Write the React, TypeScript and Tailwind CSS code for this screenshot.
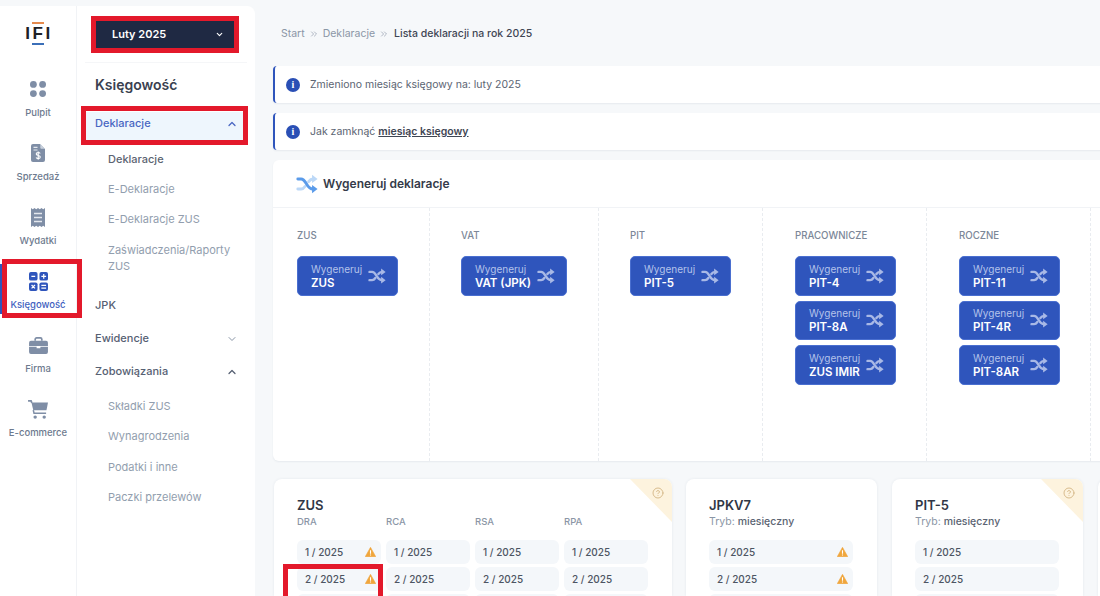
import { ChevronDown, ChevronUp, ChevronsRight, CircleHelp } from "lucide-react";

const Shuffle = ({ className = "", main = "currentColor", light = "currentColor" }: { className?: string; main?: string; light?: string }) => (
  <svg viewBox="0 0 24 24" fill="none" className={className}>
    <path d="M2 17.5h3.5c2 0 3.2-1.2 4.3-2.8M13.8 9.4C15 7.8 16.2 6.5 18.5 6.5" stroke={light} strokeWidth="3.2" strokeLinecap="round" />
    <path d="M17.5 2 23.5 6.5l-6 4.5z" fill={light} />
    <path d="M2 6.5h3.5c3 0 4.2 2.4 6 5.5s3.2 5.5 7 5.5" stroke={main} strokeWidth="3.2" strokeLinecap="round" />
    <path d="M17.5 13 23.5 17.5l-6 4.5z" fill={main} />
  </svg>
);

const iconPulpit = (
  <svg viewBox="0 0 16 16" className="w-[16px] h-[16px]" fill="#7f8ea6">
    <circle cx="3.4" cy="3.4" r="3.4" />
    <circle cx="12.6" cy="3.4" r="3.4" />
    <circle cx="3.4" cy="12.6" r="3.4" />
    <circle cx="12.6" cy="12.6" r="3.4" />
  </svg>
);

const iconSprzedaz = (
  <svg viewBox="0 0 14 18" className="w-[14px] h-[18px]">
    <path d="M2 0h7l5 5v11a2 2 0 0 1-2 2H2a2 2 0 0 1-2-2V2a2 2 0 0 1 2-2z" fill="#7f8ea6" />
    <path d="M9.3 0v3.7a1 1 0 0 0 1 1H14z" fill="#c9d1dd" />
    <path d="M2.5 3.4h4M2.5 6h4" stroke="#e4e8ee" strokeWidth="1.1" />
    <path d="M9.2 9.4c-.4-.7-1.2-.9-2-.9-1.1 0-2 .5-2 1.5 0 2 4.1 1 4.1 3 0 1-.9 1.6-2.1 1.6-.9 0-1.7-.4-2.1-1.1M7.2 7.5v8.2" stroke="#fff" strokeWidth="1.1" fill="none" />
  </svg>
);

const iconWydatki = (
  <svg viewBox="0 0 14 19" className="w-[14px] h-[19px]">
    <path d="M0 0l1.75 1.2L3.5 0l1.75 1.2L7 0l1.75 1.2L10.5 0l1.75 1.2L14 0v19l-1.75-1.2L10.5 19l-1.75-1.2L7 19l-1.75-1.2L3.5 19l-1.75-1.2L0 19z" fill="#7f8ea6" />
    <path d="M3 5.5h8M3 9.5h8M3 13.5h8" stroke="#e4e8ee" strokeWidth="1.4" />
  </svg>
);

const iconKsiegowosc = (
  <svg viewBox="0 0 20 20" className="w-[19px] h-[19px]">
    <rect x="0" y="0" width="9" height="9" rx="2" fill="#2f55bc" />
    <rect x="11" y="0" width="9" height="9" rx="2" fill="#2f55bc" />
    <rect x="0" y="11" width="9" height="9" rx="2" fill="#2f55bc" />
    <rect x="11" y="11" width="9" height="9" rx="2" fill="#2f55bc" />
    <path d="M2.5 4.5h4M13 4.5h5M15.5 2v5M2.7 13.7l3.6 3.6M6.3 13.7l-3.6 3.6M13 14h5M13 17h5" stroke="#fff" strokeWidth="1.3" />
  </svg>
);

const iconFirma = (
  <svg viewBox="0 0 20 18" className="w-[19px] h-[17px]">
    <path d="M6.5 4V2.5A1.5 1.5 0 0 1 8 1h4a1.5 1.5 0 0 1 1.5 1.5V4" fill="none" stroke="#7f8ea6" strokeWidth="1.8" />
    <path d="M0 6a2 2 0 0 1 2-2h16a2 2 0 0 1 2 2v3.4H0z" fill="#7f8ea6" />
    <path d="M0 10.4h8V12h4v-1.6h8V16a2 2 0 0 1-2 2H2a2 2 0 0 1-2-2z" fill="#7f8ea6" />
  </svg>
);

const iconCart = (
  <svg viewBox="0 0 22 20" className="w-[21px] h-[19px]">
    <path d="M0 1h3.2l.8 2" fill="none" stroke="#7f8ea6" strokeWidth="1.8" />
    <path d="M3.6 2.5H21l-1.6 8.2H5.5z" fill="#7f8ea6" />
    <path d="M5.5 10.7 6.3 14H19" fill="none" stroke="#7f8ea6" strokeWidth="1.6" />
    <circle cx="7.5" cy="18" r="1.8" fill="#7f8ea6" />
    <circle cx="17" cy="18" r="1.8" fill="#7f8ea6" />
  </svg>
);

const railItems = [
  { label: "Pulpit", icon: iconPulpit },
  { label: "Sprzedaż", icon: iconSprzedaz },
  { label: "Wydatki", icon: iconWydatki },
  { label: "Księgowość", icon: iconKsiegowosc, active: true },
  { label: "Firma", icon: iconFirma },
  { label: "E-commerce", icon: iconCart },
];

const Rail = () => (
  <div className="w-[77px] shrink-0 border-r border-[#f1f3f6] flex flex-col items-center">
    <div className="mt-[16px] h-[26px] w-full flex flex-col items-center">
      <div className="w-[12px] h-[2px] bg-[#e58a4e]" />
      <div className="text-[17px] leading-[19px] font-bold tracking-[2.5px] pl-[2px] text-[#1d2026] font-['Liberation_Sans',sans-serif]">IFI</div>
      <div className="w-[12px] h-[2px] bg-[#3b6fb8]" />
    </div>
    <div className="mt-[18px] w-full flex flex-col">
      {railItems.map((item) => (
        <div key={item.label} className="relative h-[64px] flex flex-col items-center pt-[11px]">
          {item.active && <div className="absolute left-0 top-[6px] w-[2px] h-[50px] bg-[#2f55bc]" />}
          <div className="h-[24px] flex items-center justify-center">{item.icon}</div>
          <div className={"mt-[5px] text-[9.5px] leading-[14px] font-medium " + (item.active ? "text-[#3f5fc0]" : "text-[#6d7a8e]")}>
            {item.label}
          </div>
        </div>
      ))}
    </div>
  </div>
);

const SubLink = ({ label, dark }: { label: string; dark?: boolean }) => (
  <div className={"h-[30px] flex items-center pl-[31px] text-[11px] " + (dark ? "text-[#5b6472] font-medium" : "text-[#929eae]")}>{label}</div>
);

const MonthMenu = () => (
  <div className="flex-1 min-w-0 flex flex-col">
    <div className="mx-[19px] mt-[15px] h-[27px] bg-[#1f2943] flex items-center justify-between pl-[16px] pr-[12px] text-white text-[11px] font-semibold">
      Luty 2025
      <ChevronDown className="w-[9px] h-[9px]" strokeWidth={3} />
    </div>
    <div className="mx-[8px] mt-[14px] h-px bg-[#f5f6f8]" />
    <div className="pl-[18px] mt-[11px] h-[20px] flex items-center text-[14px] font-semibold text-[#3a4150]">Księgowość</div>
    <div className="mt-[18px] ml-[9px] mr-[11px] h-[29px] pb-[6px] bg-[#eef6fd] flex items-center justify-between pl-[9px] pr-[6px] text-[11px] font-medium text-[#4866c2]">
      Deklaracje
      <ChevronUp className="w-[12px] h-[12px] text-[#4866c2]" strokeWidth={2.5} />
    </div>
    <div className="mt-[3px]">
      <SubLink label="Deklaracje" dark />
      <SubLink label="E-Deklaracje" />
      <SubLink label="E-Deklaracje ZUS" />
      <div className="h-[48px] flex items-center pl-[31px] text-[11px] leading-[16px] text-[#929eae]">
        Zaświadczenia/Raporty
        <br />
        ZUS
      </div>
    </div>
    <div className="mt-[7px] text-[11px] font-medium text-[#566073]">
      <div className="h-[33px] flex items-center pl-[18px]">JPK</div>
      <div className="h-[33px] flex items-center justify-between pl-[18px] pr-[17px]">
        Ewidencje
        <ChevronDown className="w-[12px] h-[12px] text-[#8995a6]" strokeWidth={2} />
      </div>
      <div className="h-[33px] flex items-center justify-between pl-[18px] pr-[17px]">
        Zobowiązania
        <ChevronUp className="w-[12px] h-[12px] text-[#566073]" strokeWidth={2.5} />
      </div>
    </div>
    <div className="mt-[3px] flex flex-col gap-[0.5px]">
      <SubLink label="Składki ZUS" />
      <SubLink label="Wynagrodzenia" />
      <SubLink label="Podatki i inne" />
      <SubLink label="Paczki przelewów" />
    </div>
  </div>
);

const InfoAlert = ({ children }: { children: React.ReactNode }) => (
  <div className="h-[37px] bg-white rounded-l-[4px] border-l-2 border-[#2f55bc] shadow-[0_1px_2px_rgba(30,50,90,0.07)] flex items-center pl-[11px] text-[10.5px] text-[#5b6472]">
    <div className="w-[14px] h-[14px] rounded-full bg-[#2a4fb5] text-white text-[10px] leading-[14px] text-center font-bold font-['Liberation_Serif',serif] mr-[10px]">i</div>
    <div>{children}</div>
  </div>
);

const GenButton = ({ label, wide }: { label: string; wide?: boolean }) => (
  <div className={"h-[39.5px] bg-[#2f55bc] border border-[#4a6fd0] rounded-[5px] flex items-center justify-between pl-[13px] pr-[11px] " + (wide ? "w-[106px]" : "w-[101px]")}>
    <div>
      <div className="text-[10px] leading-[14px] text-[#b4c3ea]">Wygeneruj</div>
      <div className="text-[11.5px] leading-[14px] font-semibold text-white whitespace-nowrap">{label}</div>
    </div>
    <Shuffle className="w-[18px] h-[18px] shrink-0 text-[#a9b9e6]" />
  </div>
);

const GenColumn = ({ title, buttons, width, pad }: { title: string; buttons: string[]; width: string; pad: string }) => (
  <div className={"shrink-0 border-r border-dashed border-[#e9ecf0] pt-[21px] " + width + " " + pad}>
    <div className="h-[14px] flex items-center text-[9.7px] font-medium text-[#7c8798]">{title}</div>
    <div className="mt-[13px] flex flex-col gap-[5px]">
      {buttons.map((b) => (
        <GenButton key={b} label={b} wide={b === "VAT (JPK)"} />
      ))}
    </div>
  </div>
);

const Warn = () => (
  <svg viewBox="0 0 20 18" className="w-[11px] h-[10px] shrink-0">
    <path d="M10 0.5 19.6 17.5H0.4z" fill="#f0a63c" stroke="#f0a63c" strokeLinejoin="round" />
    <path d="M10 6v6M10 13.6v1.8" stroke="#fff" strokeWidth="2" />
  </svg>
);

const PeriodCell = ({ label, warn }: { label?: string; warn?: boolean }) => (
  <div className="h-[24px] shrink-0 rounded-[6px] bg-[#f4f7fa] flex items-center justify-between pl-[8px] pr-[5px] text-[10px] font-medium text-[#4d5563]">
    {label}
    {warn && <Warn />}
  </div>
);

const Corner = () => (
  <>
    <div className="absolute top-0 right-0 w-[42px] h-[43px] bg-[#fdf3de] [clip-path:polygon(0_0,100%_0,100%_100%)]" />
    <CircleHelp className="absolute top-[8px] right-[8px] w-[12px] h-[12px] text-[#d4b684]" strokeWidth={1.8} />
  </>
);

const cardClass = "relative shrink-0 h-[117px] bg-white rounded-t-[8px] shadow-[0_0_3px_rgba(30,50,90,0.08)] overflow-hidden pl-[23px] pr-[24px] pt-[17px] ";

const ModeCard = ({ title, width, corner, warn }: { title: string; width: string; corner?: boolean; warn?: boolean }) => (
  <div className={cardClass + width}>
    {corner && <Corner />}
    <div className="text-[13px] leading-[18px] font-semibold text-[#303645]">{title}</div>
    <div className="mt-[1px] text-[10.5px] leading-[14px] text-[#8b96a6]">
      Tryb: <span className="font-medium text-[#5b6472]">miesięczny</span>
    </div>
    <div className="mt-[11px] flex flex-col gap-[3px]">
      <PeriodCell label="1 / 2025" warn={warn} />
      <PeriodCell label="2 / 2025" warn={warn} />
      <PeriodCell />
    </div>
  </div>
);

const ZusCard = () => (
  <div className={cardClass + "w-[398px]"}>
    <Corner />
    <div className="text-[13px] leading-[18px] font-semibold text-[#303645]">ZUS</div>
    <div className="mt-[1px] grid grid-cols-4 gap-x-[5px]">
      {["DRA", "RCA", "RSA", "RPA"].map((t, i) => (
        <div key={t} className="flex flex-col gap-[3px]">
          <div className="h-[14px] mb-[8px] text-[9.5px] leading-[14px] font-medium text-[#8b96a6]">{t}</div>
          <PeriodCell label="1 / 2025" warn={i === 0} />
          <PeriodCell label="2 / 2025" warn={i === 0} />
          <PeriodCell />
        </div>
      ))}
    </div>
  </div>
);

export default function App() {
  return (
    <div className="relative w-[1100px] h-[596px] overflow-hidden bg-[#f6f8fa] flex font-['Inter',sans-serif]">
      <div className="w-[255px] shrink-0 mt-[6px] bg-white rounded-tr-[8px] flex">
        <Rail />
        <MonthMenu />
      </div>

      <div className="flex-1 min-w-0 pl-[18px] overflow-hidden">
        <div className="w-[900px]">
          <div className="h-[66px] pt-[2px] flex items-center gap-[4px] text-[10.5px] pl-[8px] text-[#8b96a6]">
            Start
            <ChevronsRight className="w-[10px] h-[10px] text-[#8b96a6]" strokeWidth={1.6} />
            Deklaracje
            <ChevronsRight className="w-[10px] h-[10px] text-[#8b96a6]" strokeWidth={1.6} />
            <span className="ml-[1px] font-medium text-[#3f4654]">Lista deklaracji na rok 2025</span>
          </div>

          <div className="flex flex-col gap-[10px]">
            <InfoAlert>Zmieniono miesiąc księgowy na: luty 2025</InfoAlert>
            <InfoAlert>
              Jak zamknąć <span className="font-semibold text-[#3f4654] underline">miesiąc księgowy</span>
            </InfoAlert>
          </div>

          <div className="mt-[10px] h-[301px] bg-white rounded-tl-[6px] rounded-bl-[6px] shadow-[0_1px_2px_rgba(30,50,90,0.07)] flex flex-col">
            <div className="h-[48px] shrink-0 border-b border-[#f1f3f6] flex items-center gap-[5px] pl-[23px]">
              <Shuffle className="w-[22px] h-[22px]" main="#5a9bea" light="#bcd8f7" />
              <div className="text-[12px] font-semibold text-[#353b49]">Wygeneruj deklaracje</div>
            </div>
            <div className="flex-1 flex">
              <GenColumn title="ZUS" buttons={["ZUS"]} width="w-[157px]" pad="pl-[24px]" />
              <GenColumn title="VAT" buttons={["VAT (JPK)"]} width="w-[169px]" pad="pl-[31px]" />
              <GenColumn title="PIT" buttons={["PIT-5"]} width="w-[164px]" pad="pl-[31px]" />
              <GenColumn title="PRACOWNICZE" buttons={["PIT-4", "PIT-8A", "ZUS IMIR"]} width="w-[164px]" pad="pl-[32px]" />
              <GenColumn title="ROCZNE" buttons={["PIT-11", "PIT-4R", "PIT-8AR"]} width="w-[164px]" pad="pl-[32px]" />
            </div>
          </div>

          <div className="mt-[18px] pl-[1px] flex gap-[14px]">
            <ZusCard />
            <ModeCard title="JPKV7" width="w-[191px]" warn />
            <ModeCard title="PIT-5" width="w-[191px] ml-[1px]" corner />
            <div className={cardClass + "w-[192px] ml-[1px]"} />
          </div>
        </div>
      </div>

      {/* czerwone ramki z instrukcji */}
      <div className="absolute left-[91px] top-[16px] w-[148px] h-[37px] border-[5px] border-[#e3192b]" />
      <div className="absolute left-[81px] top-[106px] w-[167px] h-[39px] border-[5px] border-[#e3192b]" />
      <div className="absolute left-[2px] top-[259px] w-[80px] h-[59px] border-[5px] border-[#e3192b]" />
      <div className="absolute left-[283px] top-[564px] w-[100px] h-[40px] border-[5px] border-[#e3192b]" />
    </div>
  );
}
